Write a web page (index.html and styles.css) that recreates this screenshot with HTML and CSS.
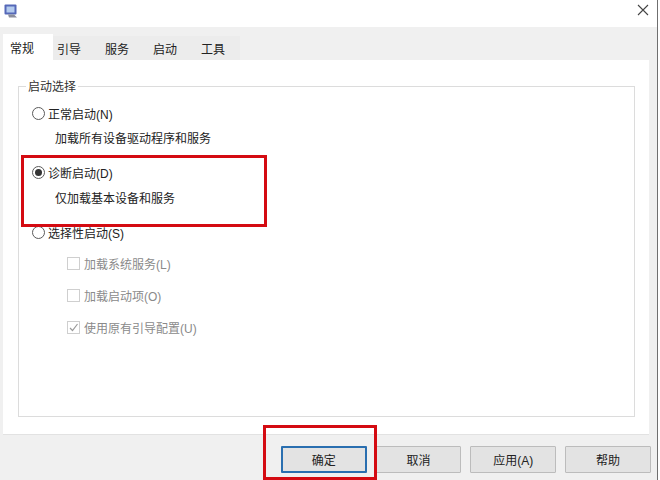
FILE: index.html
```html
<!DOCTYPE html>
<html lang="zh-CN">
<head>
<meta charset="utf-8">
<title>系统配置</title>
<link rel="stylesheet" href="styles.css">
</head>
<body>
<div class="window">
  <header class="titlebar">
    <svg class="app-icon" width="14" height="14" viewBox="0 0 14 14">
      <rect x="0.5" y="0.5" width="12" height="10" rx="1" fill="#5568b8"/>
      <rect x="2.5" y="2.5" width="8" height="6" fill="#b4cbee"/>
      <path d="M4 10.5h6l3 3H5z" fill="#8a8d9c"/>
    </svg>
    <svg class="close" width="12" height="12" viewBox="0 0 12 12">
      <path d="M1 1l10 10M11 1L1 11" stroke="#444" stroke-width="1.1" fill="none"/>
    </svg>
  </header>
  <div class="body-band">
    <nav class="tabs">
      <span class="tab tab-active">常规</span>
      <span class="tab">引导</span>
      <span class="tab">服务</span>
      <span class="tab">启动</span>
      <span class="tab tab-last">工具</span>
    </nav>
    <main class="panel">
      <section class="group">
        <span class="legend">启动选择</span>
        <div class="option opt-normal">
          <span class="radio"></span><span>正常启动(N)</span>
        </div>
        <p class="desc desc-normal">加载所有设备驱动程序和服务</p>
        <div class="option opt-diag">
          <span class="radio radio-on"></span><span>诊断启动(D)</span>
        </div>
        <p class="desc desc-diag">仅加载基本设备和服务</p>
        <div class="option opt-sel">
          <span class="radio"></span><span>选择性启动(S)</span>
        </div>
        <ul class="checks">
          <li class="check"><span class="box"></span>加载系统服务(L)</li>
          <li class="check"><span class="box"></span>加载启动项(O)</li>
          <li class="check">
            <span class="box">
              <svg width="11" height="11" viewBox="0 0 11 11"><path d="M2 6l2.5 2.5L9.5 2" stroke="#9a9a9a" stroke-width="1.2" fill="none"/></svg>
            </span>使用原有引导配置(U)
          </li>
        </ul>
      </section>
    </main>
    <footer class="footer">
      <button class="btn btn-default">确定</button>
      <button class="btn">取消</button>
      <button class="btn">应用(A)</button>
      <button class="btn">帮助</button>
    </footer>
  </div>
</div>
<div class="mark mark-diag"></div>
<div class="mark mark-ok"></div>
</body>
</html>
```
FILE: styles.css
```css
* { box-sizing: border-box; }
html, body { margin: 0; padding: 0; }
body {
  width: 660px;
  height: 480px;
  overflow: hidden;
  position: relative;
  background: #fff;
  font-family: "Liberation Sans", "Noto Sans CJK SC", sans-serif;
  font-size: 12px;
  color: #222;
}
.window { width: 658px; height: 480px; border-right: 1px solid #6f6f6f; display: flex; flex-direction: column; }
.titlebar { height: 27px; flex: none; display: flex; align-items: flex-start; justify-content: space-between; padding: 3px 8px 0 4px; background: #fff; }
.close { margin-top: 1px; }
.app-icon { margin-top: 1px; }
.body-band { flex: 1; background: #f0f0f0; display: flex; flex-direction: column; padding: 9px 0 0 3px; }
.tabs { height: 24px; flex: none; display: flex; align-items: stretch; }
.tab { width: 48px; display: flex; align-items: center; padding: 1px 0 0 4px; background: #ececec; }
.tab-last { width: 43px; }
.tab-active { width: 50px; background: #fff; margin-top: -2px; height: 26px; position: relative; z-index: 1; padding-left: 7px; }
.panel { width: 646px; height: 375px; flex: none; background: #fff; border-bottom: 1px solid #e2e2e2; padding: 26px 14px 18px 15px; }
.group { height: 331px; border: 1px solid #dcdcdc; position: relative; padding: 0 0 0 13px; }
.legend { position: absolute; top: -8px; left: 7px; line-height: 16px; padding: 0 2px; background: #fff; color: #333; }
.option { display: flex; align-items: center; gap: 3px; height: 16px; }
.radio { width: 13px; height: 13px; border: 1px solid #5a5a5a; border-radius: 50%; background: #fff; display: flex; align-items: center; justify-content: center; }
.radio-on::after { content: ""; width: 7px; height: 7px; border-radius: 50%; background: #333; }
.opt-normal { margin-top: 18px; }
.desc { margin: 0 0 0 23px; line-height: 16px; }
.desc-normal { margin-top: 10px; }
.opt-diag { margin-top: 17px; }
.desc-diag { margin-top: 11px; }
.opt-sel { margin-top: 17px; }
.checks { list-style: none; margin: 15px 0 0 35px; padding: 0; color: #8a8a8a; display: flex; flex-direction: column; gap: 16px; }
.check { display: flex; align-items: center; gap: 4px; height: 16px; }
.box { width: 13px; height: 13px; border: 1px solid #cfcfcf; background: #fff; display: flex; align-items: center; justify-content: center; }
.footer { flex: 1; display: flex; gap: 9px; padding: 11px 0 0 278px; }
.btn { width: 85.7px; height: 27px; border: 1px solid #bcbcbc; border-radius: 1px; background: #e3e3e3; font: inherit; color: #222; padding: 0; }
.btn-default { border: 2px solid #2a6fb0; }
.mark { position: absolute; border: 3px solid #d40b12; pointer-events: none; }
.mark-diag { left: 21px; top: 155px; width: 246px; height: 72px; }
.mark-ok { left: 263px; top: 425px; width: 114px; height: 55px; }
```
